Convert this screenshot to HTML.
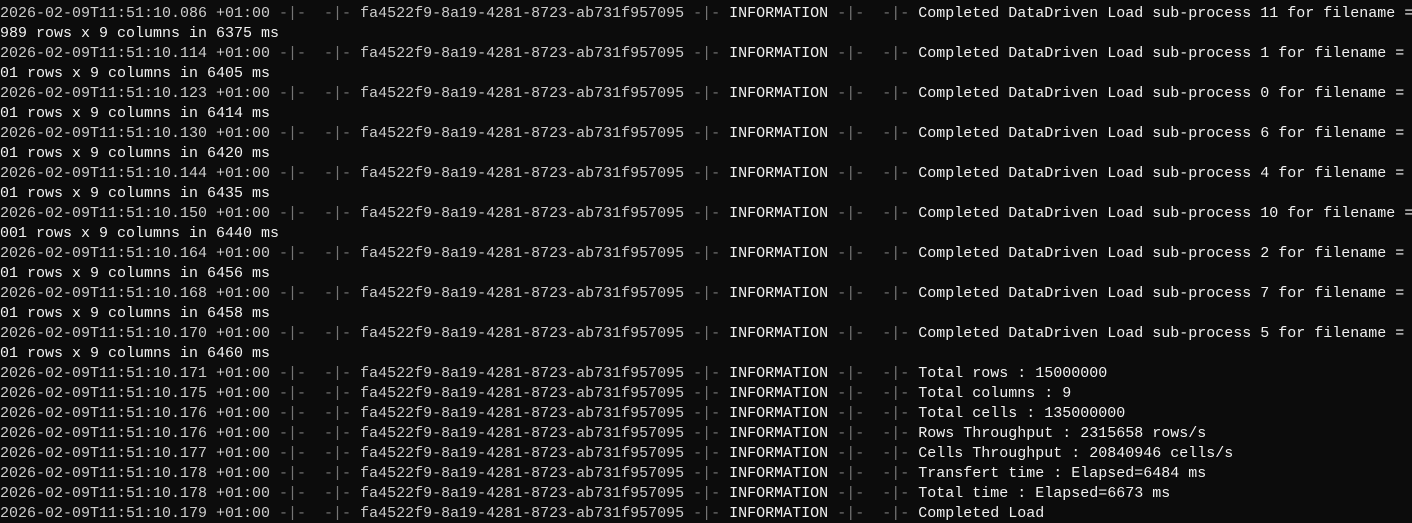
<!DOCTYPE html>
<html><head><meta charset="utf-8"><style>
html,body{margin:0;padding:0;background:#0c0c0c;width:1412px;height:523px;overflow:hidden}
pre{margin:0;padding:4px 0 0 0;font-family:"Liberation Mono",monospace;font-size:15px;line-height:20px;color:#cccccc;white-space:pre;overflow:hidden}
.s{color:#767676}.m{color:#f2f2f2}
</style></head><body><pre>
2026-02-09T11:51:10.086 +01:00 <span class="s">-|-  -|-</span> fa4522f9-8a19-4281-8723-ab731f957095 <span class="s">-|-</span> <span class="m">INFORMATION</span> <span class="s">-|-  -|-</span> <span class="m">Completed DataDriven Load sub-process 11 for filename =</span>
<span class="m">989 rows x 9 columns in 6375 ms</span>
2026-02-09T11:51:10.114 +01:00 <span class="s">-|-  -|-</span> fa4522f9-8a19-4281-8723-ab731f957095 <span class="s">-|-</span> <span class="m">INFORMATION</span> <span class="s">-|-  -|-</span> <span class="m">Completed DataDriven Load sub-process 1 for filename =</span>
<span class="m">01 rows x 9 columns in 6405 ms</span>
2026-02-09T11:51:10.123 +01:00 <span class="s">-|-  -|-</span> fa4522f9-8a19-4281-8723-ab731f957095 <span class="s">-|-</span> <span class="m">INFORMATION</span> <span class="s">-|-  -|-</span> <span class="m">Completed DataDriven Load sub-process 0 for filename =</span>
<span class="m">01 rows x 9 columns in 6414 ms</span>
2026-02-09T11:51:10.130 +01:00 <span class="s">-|-  -|-</span> fa4522f9-8a19-4281-8723-ab731f957095 <span class="s">-|-</span> <span class="m">INFORMATION</span> <span class="s">-|-  -|-</span> <span class="m">Completed DataDriven Load sub-process 6 for filename =</span>
<span class="m">01 rows x 9 columns in 6420 ms</span>
2026-02-09T11:51:10.144 +01:00 <span class="s">-|-  -|-</span> fa4522f9-8a19-4281-8723-ab731f957095 <span class="s">-|-</span> <span class="m">INFORMATION</span> <span class="s">-|-  -|-</span> <span class="m">Completed DataDriven Load sub-process 4 for filename =</span>
<span class="m">01 rows x 9 columns in 6435 ms</span>
2026-02-09T11:51:10.150 +01:00 <span class="s">-|-  -|-</span> fa4522f9-8a19-4281-8723-ab731f957095 <span class="s">-|-</span> <span class="m">INFORMATION</span> <span class="s">-|-  -|-</span> <span class="m">Completed DataDriven Load sub-process 10 for filename =</span>
<span class="m">001 rows x 9 columns in 6440 ms</span>
2026-02-09T11:51:10.164 +01:00 <span class="s">-|-  -|-</span> fa4522f9-8a19-4281-8723-ab731f957095 <span class="s">-|-</span> <span class="m">INFORMATION</span> <span class="s">-|-  -|-</span> <span class="m">Completed DataDriven Load sub-process 2 for filename =</span>
<span class="m">01 rows x 9 columns in 6456 ms</span>
2026-02-09T11:51:10.168 +01:00 <span class="s">-|-  -|-</span> fa4522f9-8a19-4281-8723-ab731f957095 <span class="s">-|-</span> <span class="m">INFORMATION</span> <span class="s">-|-  -|-</span> <span class="m">Completed DataDriven Load sub-process 7 for filename =</span>
<span class="m">01 rows x 9 columns in 6458 ms</span>
2026-02-09T11:51:10.170 +01:00 <span class="s">-|-  -|-</span> fa4522f9-8a19-4281-8723-ab731f957095 <span class="s">-|-</span> <span class="m">INFORMATION</span> <span class="s">-|-  -|-</span> <span class="m">Completed DataDriven Load sub-process 5 for filename =</span>
<span class="m">01 rows x 9 columns in 6460 ms</span>
2026-02-09T11:51:10.171 +01:00 <span class="s">-|-  -|-</span> fa4522f9-8a19-4281-8723-ab731f957095 <span class="s">-|-</span> <span class="m">INFORMATION</span> <span class="s">-|-  -|-</span> <span class="m">Total rows : 15000000</span>
2026-02-09T11:51:10.175 +01:00 <span class="s">-|-  -|-</span> fa4522f9-8a19-4281-8723-ab731f957095 <span class="s">-|-</span> <span class="m">INFORMATION</span> <span class="s">-|-  -|-</span> <span class="m">Total columns : 9</span>
2026-02-09T11:51:10.176 +01:00 <span class="s">-|-  -|-</span> fa4522f9-8a19-4281-8723-ab731f957095 <span class="s">-|-</span> <span class="m">INFORMATION</span> <span class="s">-|-  -|-</span> <span class="m">Total cells : 135000000</span>
2026-02-09T11:51:10.176 +01:00 <span class="s">-|-  -|-</span> fa4522f9-8a19-4281-8723-ab731f957095 <span class="s">-|-</span> <span class="m">INFORMATION</span> <span class="s">-|-  -|-</span> <span class="m">Rows Throughput : 2315658 rows/s</span>
2026-02-09T11:51:10.177 +01:00 <span class="s">-|-  -|-</span> fa4522f9-8a19-4281-8723-ab731f957095 <span class="s">-|-</span> <span class="m">INFORMATION</span> <span class="s">-|-  -|-</span> <span class="m">Cells Throughput : 20840946 cells/s</span>
2026-02-09T11:51:10.178 +01:00 <span class="s">-|-  -|-</span> fa4522f9-8a19-4281-8723-ab731f957095 <span class="s">-|-</span> <span class="m">INFORMATION</span> <span class="s">-|-  -|-</span> <span class="m">Transfert time : Elapsed=6484 ms</span>
2026-02-09T11:51:10.178 +01:00 <span class="s">-|-  -|-</span> fa4522f9-8a19-4281-8723-ab731f957095 <span class="s">-|-</span> <span class="m">INFORMATION</span> <span class="s">-|-  -|-</span> <span class="m">Total time : Elapsed=6673 ms</span>
2026-02-09T11:51:10.179 +01:00 <span class="s">-|-  -|-</span> fa4522f9-8a19-4281-8723-ab731f957095 <span class="s">-|-</span> <span class="m">INFORMATION</span> <span class="s">-|-  -|-</span> <span class="m">Completed Load</span>
</pre></body></html>
